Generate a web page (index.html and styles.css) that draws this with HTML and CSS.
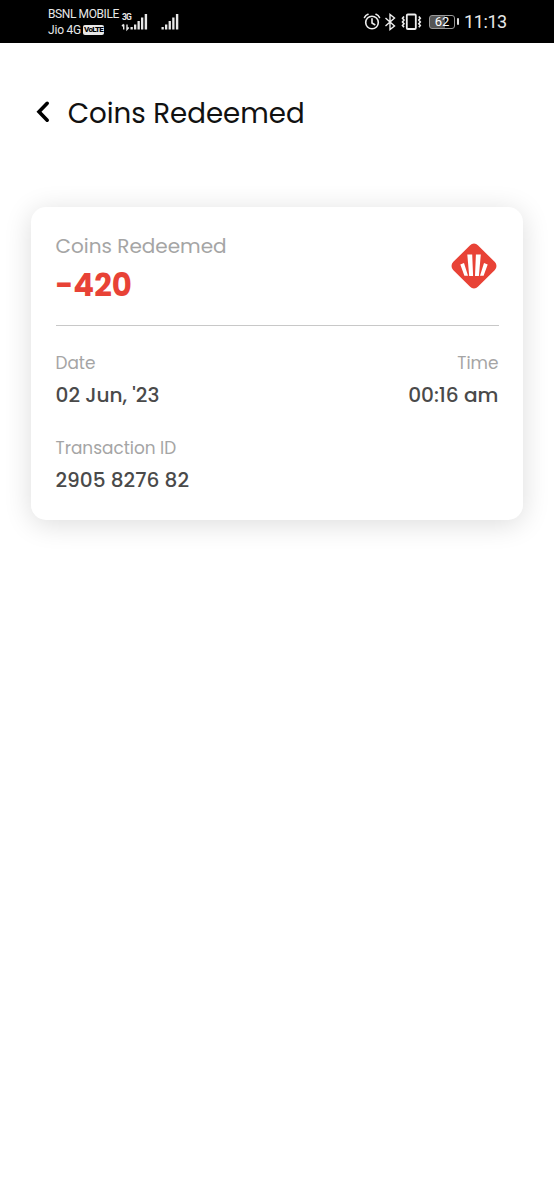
FILE: index.html
```html
<!DOCTYPE html>
<html lang="en">
<head>
<meta charset="utf-8">
<meta name="viewport" content="width=device-width, initial-scale=1">
<title>Coins Redeemed</title>
<link rel="stylesheet" href="styles.css">
</head>
<body>
<header class="status">
  <div class="carriers">
    <div class="carrier">BSNL MOBILE</div>
    <div class="carrier carrier-two">Jio 4G <span class="volte">VoLTE</span></div>
  </div>
  <div class="network">
    <span class="network-type">3G</span>
    <svg class="signals" width="60" height="20" viewBox="0 0 60 20" fill="#e8e8e8">
      <path d="M2.700 12.500v5M1 14.200l1.700-2M6 12.500v5l1.800-2" fill="none" stroke="#e8e8e8" stroke-width="1.400"/>
      <rect x="9.500" y="15" width="2.300" height="2.500"/><rect x="13" y="12.500" width="2.300" height="5"/><rect x="16.500" y="9" width="2.300" height="8.500"/><rect x="20" y="5.500" width="2.300" height="12"/><rect x="23.700" y="2" width="2.400" height="15.500"/>
      <rect x="40.500" y="15" width="2.300" height="2.500"/><rect x="44" y="12.500" width="2.300" height="5"/><rect x="47.600" y="9" width="2.300" height="8.500"/><rect x="51.200" y="5.500" width="2.300" height="12"/><rect x="54.900" y="2" width="2.400" height="15.500"/>
    </svg>
  </div>
  <div class="indicators">
    <svg width="60" height="20" viewBox="0 0 60 20" fill="none" stroke="#ededed" stroke-width="1.600">
      <circle cx="9" cy="10.500" r="6.300"/><path d="M9 6.800v4.200l2.800 1.700M1.500 5.500Q2.500 3 5 2.200M16.500 5.500Q15.500 3 13 2.200" stroke-linecap="round"/>
      <path d="M22.500 6l9 8-4.500 3.500V2.500L31.500 6l-9 8" stroke-width="1.400"/>
      <rect x="43.800" y="2.500" width="9" height="14.500" rx="1" stroke-width="1.800"/>
      <path d="M41 4.500l-1.500 1.800L41 8.100l-1.500 1.800L41 11.700l-1.500 1.800L41 15.300M55.800 4.500l1.500 1.800-1.500 1.800 1.500 1.800-1.500 1.800 1.500 1.800-1.500 1.800" stroke-width="1.600"/>
    </svg>
    <span class="battery">62</span>
    <span class="battery-tip"></span>
    <time class="clock">11:13</time>
  </div>
</header>
<main>
  <div class="heading">
    <svg class="back" width="18" height="26" viewBox="0 0 18 26"><path d="M13.200 4.300L5 12.700l8.200 8.500" fill="none" stroke="#000" stroke-width="3.600" stroke-linecap="round"/></svg>
    <h1 class="title">Coins Redeemed</h1>
  </div>
  <section class="card">
    <div class="summary">
      <div>
        <div class="summary-label">Coins Redeemed</div>
        <div class="amount">-420</div>
      </div>
      <svg class="coin" width="48" height="48" viewBox="0 0 48 48">
        <rect x="6.500" y="6.500" width="35" height="35" rx="5.500" transform="rotate(45 24 24)" fill="#e84236"/>
        <path d="M17.300 12.500h4.900l.9 21.500h-3.900zM25.900 12.500h4.900L28.900 34H25zM10.300 22.600l3.700-1.600 4 12.800h-3.600zM37.700 22.600L34 21l-4 12.800h3.600z" fill="#fff"/>
      </svg>
    </div>
    <div class="row">
      <div class="field"><div class="label">Date</div><div class="value">02 Jun, '23</div></div>
      <div class="field field-end"><div class="label">Time</div><div class="value">00:16 am</div></div>
    </div>
    <div class="field transaction"><div class="label">Transaction ID</div><div class="value">2905 8276 82</div></div>
  </section>
</main>
</body>
</html>
```
FILE: styles.css
```css
* { box-sizing: border-box; }
body { margin: 0; min-height: 1200px; background: #fff; font-family: Poppins, Inter, sans-serif; white-space: nowrap; }
svg { display: block; flex: none; }
.status { height: 43px; background: #000; color: #e8e8e8; display: flex; font-family: Roboto, sans-serif; padding-left: 48px; }
.carriers { width: 73px; padding-top: 6px; }
.carrier { font-size: 12px; letter-spacing: -.4px; line-height: 16px; display: flex; align-items: center; }
.carrier-two { letter-spacing: -.2px; }
.volte { background: #e8e8e8; color: #000; font-size: 8px; font-weight: 800; line-height: 10px; width: 21px; height: 10px; margin-left: 2px; border-radius: 2px; letter-spacing: -.7px; text-align: center; }
.network { display: grid; padding-top: 12px; width: 60px; height: 32px; }
.network-type { grid-area: 1 / 1; font-size: 8.500px; font-weight: 700; line-height: 10px; padding-left: 1px; letter-spacing: -.8px; }
.signals { grid-area: 1 / 1; }
.indicators { display: flex; align-items: center; height: 43px; margin-left: 182px; }
.battery { width: 26px; height: 14px; margin-left: 6px; border: 1px solid #999; border-radius: 3px; background: linear-gradient(90deg, #555 62%, #000 62%); color: #fff; font-size: 13px; line-height: 12px; text-align: center; }
.battery-tip { width: 2px; height: 7px; margin-left: 2px; background: #ddd; border-radius: 1px; }
.clock { margin-left: 5px; font-size: 18px; line-height: 22px; letter-spacing: -.4px; }
.heading { display: flex; align-items: center; padding: 50px 0 0 34px; height: 90px; }
.back { margin-top: -2px; }
.title { margin: 1px 0 0 15.700px; font-size: 27.700px; font-weight: 400; line-height: 40px; color: #111; }
.card { width: 492px; height: 313px; margin: 74px 0 0 31px; padding: 25px 24.500px 25px 24.500px; border-radius: 15px; background: #fff; box-shadow: 0 4px 28px rgba(0, 0, 0, .14); color: #4a4a4a; }
.summary { display: flex; justify-content: space-between; height: 94px; border-bottom: 1px solid #c8c8c8; }
.summary-label { font-size: 20px; line-height: 28px; color: #a5a5a5; }
.amount { font-size: 30.800px; line-height: 52px; font-weight: 700; color: #e84236; }
.coin { margin: 10px .5px 0 0; }
.row { display: flex; justify-content: space-between; padding-top: 24px; }
.field-end { text-align: right; }
.label { font-size: 16.900px; line-height: 26px; color: #a5a5a5; }
.value { font-size: 20.100px; line-height: 29px; margin: 5px 0 1px; font-weight: 500; }
.transaction { padding-top: 24px; }
```
